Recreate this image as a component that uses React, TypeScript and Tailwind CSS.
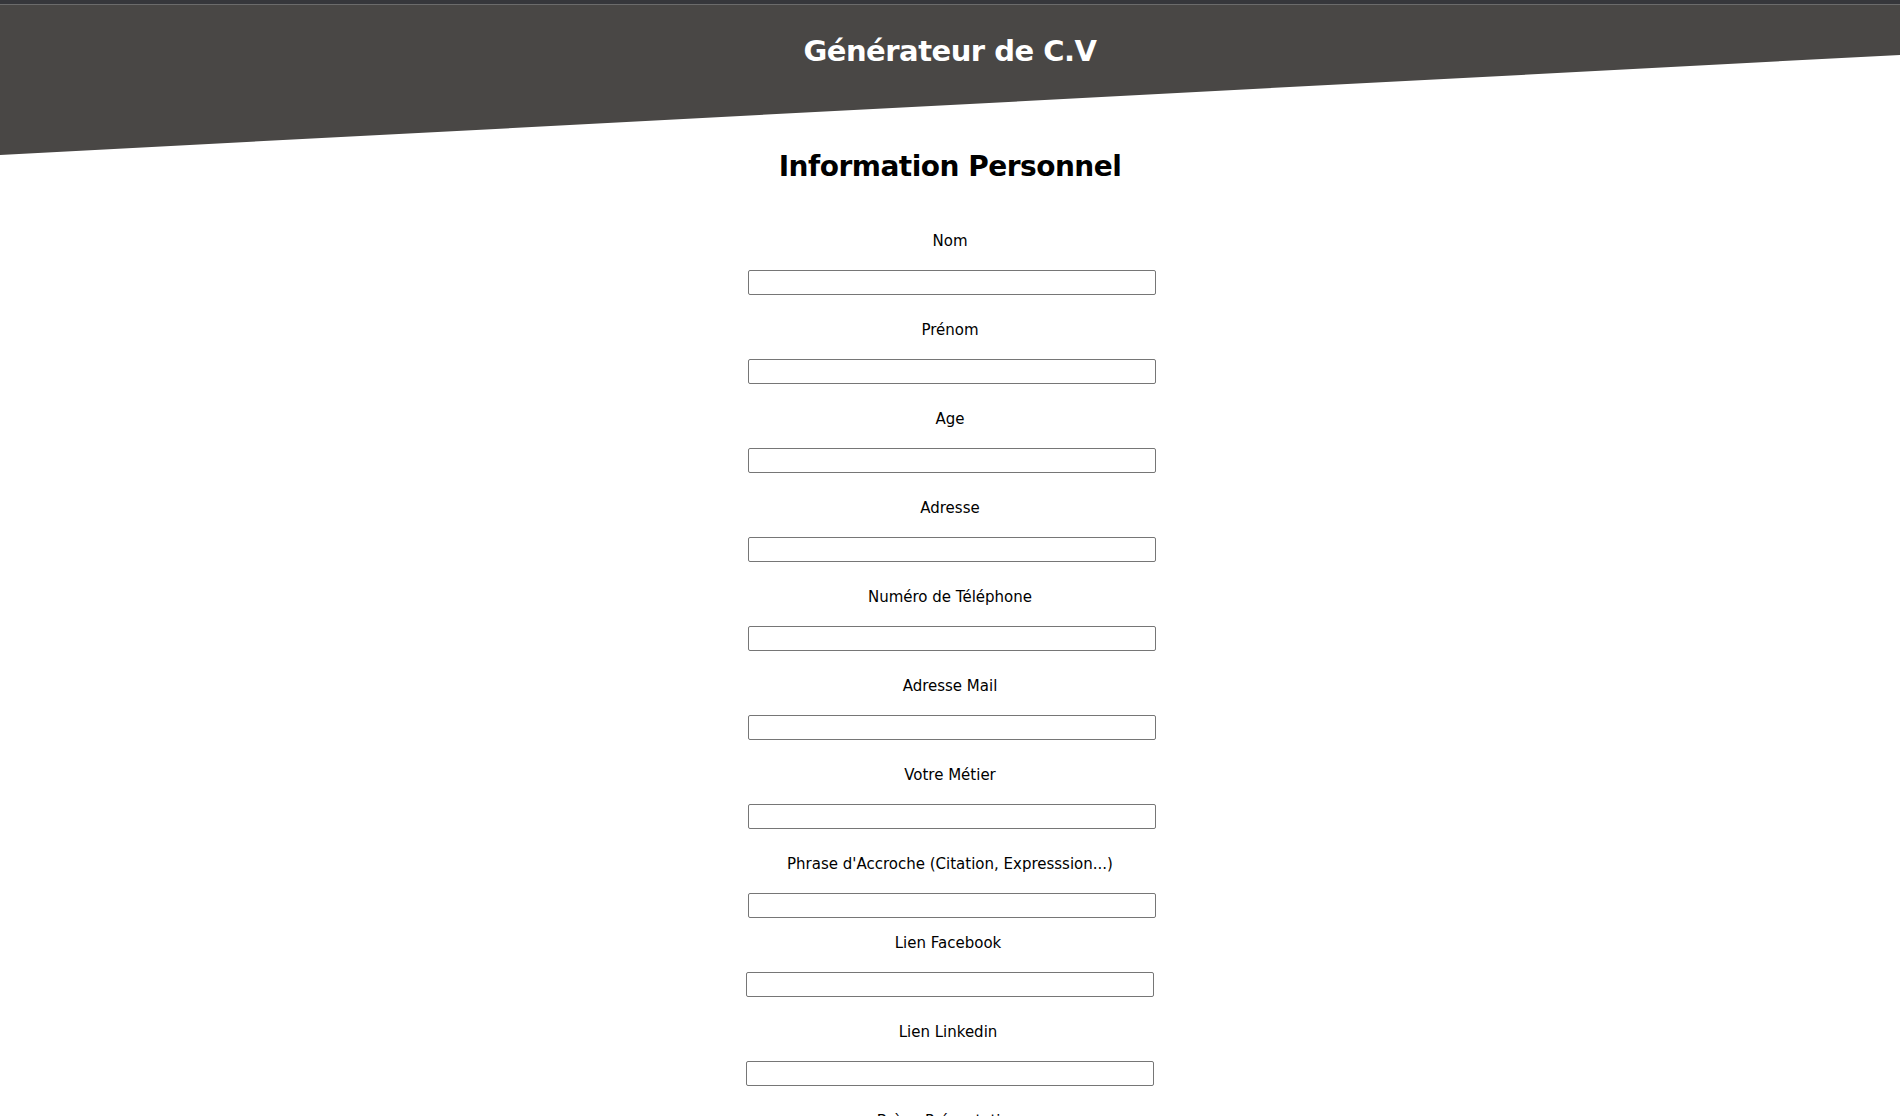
const personnel = [
  "Nom",
  "Prénom",
  "Age",
  "Adresse",
  "Numéro de Téléphone",
  "Adresse Mail",
  "Votre Métier",
  "Phrase d'Accroche (Citation, Expresssion...)",
];

const liens = ["Lien Facebook", "Lien Linkedin"];

function Champ({ label, shift }: { label: string; shift?: boolean }) {
  return (
    <div className="flex flex-col items-center">
      <label className={`block text-[15px] leading-[18px] pt-[2px] h-[18px] text-black ${shift ? "pr-1" : ""}`}>
        {label}
      </label>
      <input
        type="text"
        className={`mt-[22px] h-[25px] w-[408px] rounded-[2px] border border-[#767676] bg-white ${shift ? "" : "ml-1"}`}
      />
    </div>
  );
}

export default function App() {
  return (
    <div className="min-h-screen bg-white font-['Comic_Sans_MS','DejaVu_Sans',sans-serif] text-black">
      <div className="h-[4px] bg-[#36373b]" />
      <div className="h-px bg-[#6b6b6b]" />
      <div className="relative">
        <div className="absolute inset-x-0 top-0 h-[150px] bg-[#494745] [clip-path:polygon(0_0,100%_0,100%_33.3%,0_100%)]" />
        <header className="relative pt-[22px] text-center">
          <h1 className="text-[29px] leading-[48px] font-bold tracking-[-0.5px] text-white">
            Générateur de C.V
          </h1>
        </header>
        <main className="relative mt-[65px] flex flex-col items-center pb-10">
          <h2 className="text-[28px] leading-[48px] font-bold tracking-[-0.5px] pt-[3px] h-[48px]">
            Information Personnel
          </h2>
          <section className="mt-[42px] flex flex-col gap-[24px]">
            {personnel.map((p) => (
              <Champ key={p} label={p} />
            ))}
          </section>
          <section className="mt-[14px] flex flex-col gap-[24px]">
            {liens.map((p) => (
              <Champ key={p} label={p} shift />
            ))}
            <Champ label="Brève Présentation" shift />
          </section>
        </main>
      </div>
    </div>
  );
}
